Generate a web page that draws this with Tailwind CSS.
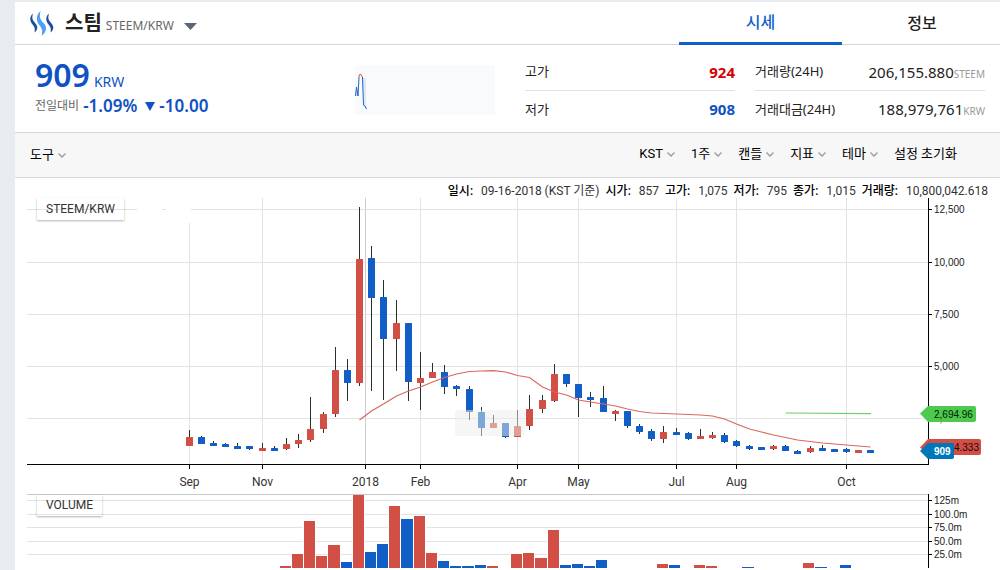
<!DOCTYPE html>
<html lang="ko">
<head>
<meta charset="utf-8">
<title>STEEM/KRW</title>
<script src="https://cdn.jsdelivr.net/npm/@tailwindcss/browser@4"></script>
</head>
<body class="min-h-screen overflow-hidden bg-[#e8ecf0] pt-0.5 pl-[15px] font-['Noto_Sans','Noto_Sans_CJK_KR',sans-serif] text-[#222]">
<main class="min-h-screen bg-white">
  <header class="flex h-[43px] items-stretch justify-between border-b border-[#d3d6dc]">
    <button class="flex items-center pl-[15px]">
      <svg class="h-[25px] w-6" viewBox="0 0 24 25" aria-hidden="true">
        <path fill="#1a5099" d="M3 2.500C1.500 8 2.500 9 5.500 12.500C8.500 16 7.500 19 4.500 21.500C5.300 17.500 4.500 16 2.500 13.500C-.8 9.500-.3 5.500 3 2.500Z"/>
        <path fill="#4ba2f2" d="M10.500 0C9 7 10.500 9 14 12.500C17.500 16.500 16.500 21 11.500 25C13 20.500 12 17.500 10 15C5.500 10 6 4 10.500 0Z"/>
        <path fill="#1a5099" d="M19 2.500C17.500 8 18.500 9 21.500 12.500C24.500 16 23.500 19 20.500 21.500C21.300 17.500 20.500 16 18.500 13.500C15.200 9.500 15.700 5.500 19 2.500Z"/>
      </svg>
      <span class="ml-[11px] text-xl font-bold leading-none">스팀</span>
      <span class="mt-1.5 ml-1 text-xs text-[#666]">STEEM/KRW</span>
      <svg class="mt-1.5 ml-2.5 h-[7px] w-[13px]" viewBox="0 0 13 7" aria-hidden="true"><path fill="#5d6578" d="M0 0H13L6.500 7Z"/></svg>
    </button>
    <nav class="flex text-base font-medium">
      <a href="#price" class="-mb-px flex w-[163px] items-center justify-center border-b-3 border-[#115fcb] text-[#115fcb]">시세</a>
      <a href="#info" class="flex w-[158px] items-center justify-center pl-0.5">정보</a>
    </nav>
  </header>

  <section class="flex h-[88px] justify-between border-b border-[#d3d6dc] pr-[15px] pl-5">
    <div class="pt-3 text-[#0f52c4]">
      <p class="flex items-baseline gap-1 leading-9"><strong class="text-[32px] font-semibold">909</strong><span class="text-sm">KRW</span></p>
      <p class="flex items-center gap-1 leading-[26px]"><span class="text-xs text-[#666]">전일대비</span><b class="text-[17px] font-semibold">-1.09%</b>
        <b class="flex items-center gap-1 text-[17px] font-semibold"><svg class="ml-1 h-[9px] w-[10px]" viewBox="0 0 10 9" aria-hidden="true"><path fill="#0f52c4" d="M0 0H10L5 9Z"/></svg>-10.00</b></p>
    </div>
    <div class="flex">
      <svg class="mt-5 mr-[30px] h-[50px] w-[140px] bg-[#f8fafc]" viewBox="0 0 140 50" fill="none" aria-hidden="true">
        <path fill="#dfe8f4" d="M0 31L1.500 22L3 31L4 13H11V44L8.500 40L7.500 13H4L3 31Z"/>
        <path stroke="#1f66c9" d="M.5 31L1.500 22L3 31L4 12M7.500 12L8.500 40L10 41L11.500 44"/>
        <path stroke="#e2574c" d="M4 12L4.500 9.500H6L7.500 12"/>
      </svg>
      <dl class="mt-[9px] mr-5 w-[210px] text-[13px]">
        <div class="flex h-[37px] items-center justify-between border-b border-[#dfe1e9]"><dt>고가</dt><dd class="text-[15px] font-bold text-[#d60000]">924</dd></div>
        <div class="flex h-[37px] items-center justify-between"><dt>저가</dt><dd class="text-[15px] font-bold text-[#0f52c4]">908</dd></div>
      </dl>
      <dl class="mt-[9px] w-[230px] text-[13px]">
        <div class="flex h-[37px] items-center justify-between border-b border-[#dfe1e9]"><dt>거래량(24H)</dt><dd class="text-[15px]">206,155.880<small class="text-[10px] text-[#999]">STEEM</small></dd></div>
        <div class="flex h-[37px] items-center justify-between"><dt>거래대금(24H)</dt><dd class="text-[15px]">188,979,761<small class="text-[10px] text-[#999]">KRW</small></dd></div>
      </dl>
    </div>
  </section>

  <div class="flex h-[45px] items-center justify-between border-b border-[#d9d9dc] bg-[#f7f7f7] pr-[43px] pl-[15px] font-['Roboto','Noto_Sans_CJK_KR',sans-serif] text-[13px] text-black">
    <button class="flex items-center gap-1">도구<svg class="h-[5px] w-2" viewBox="0 0 8 5" fill="none" stroke="#999" stroke-width="1.300"><path d="M.5 .5L4 4L7.500 .5"/></svg></button>
    <div class="-mt-0.5 flex gap-4">
      <button class="flex items-center gap-1">KST<svg class="h-[5px] w-2" viewBox="0 0 8 5" fill="none" stroke="#999" stroke-width="1.300"><path d="M.5 .5L4 4L7.500 .5"/></svg></button>
      <button class="flex items-center gap-1">1주<svg class="h-[5px] w-2" viewBox="0 0 8 5" fill="none" stroke="#999" stroke-width="1.300"><path d="M.5 .5L4 4L7.500 .5"/></svg></button>
      <button class="flex items-center gap-1">캔들<svg class="h-[5px] w-2" viewBox="0 0 8 5" fill="none" stroke="#999" stroke-width="1.300"><path d="M.5 .5L4 4L7.500 .5"/></svg></button>
      <button class="flex items-center gap-1">지표<svg class="h-[5px] w-2" viewBox="0 0 8 5" fill="none" stroke="#999" stroke-width="1.300"><path d="M.5 .5L4 4L7.500 .5"/></svg></button>
      <button class="flex items-center gap-1">테마<svg class="h-[5px] w-2" viewBox="0 0 8 5" fill="none" stroke="#999" stroke-width="1.300"><path d="M.5 .5L4 4L7.500 .5"/></svg></button>
      <button>설정 초기화</button>
    </div>
  </div>

  <section class="font-['Roboto','Noto_Sans_CJK_KR',sans-serif] text-xs text-[#333]">
    <p class="flex h-5 items-end justify-end gap-1.5 pr-3 leading-[14px] whitespace-nowrap">
      <span><b class="mr-[5px] font-medium text-black">일시:</b> 09-16-2018 (KST 기준)</span>
      <span><b class="mr-[5px] font-medium text-black">시가:</b> 857</span>
      <span><b class="mr-[5px] font-medium text-black">고가:</b> 1,075</span>
      <span><b class="mr-[5px] font-medium text-black">저가:</b> 795</span>
      <span><b class="mr-[5px] font-medium text-black">종가:</b> 1,015</span>
      <span><b class="mr-[5px] font-medium text-black">거래량:</b> 10,800,042.618</span>
    </p>
    <div class="relative">
      <svg id="chart" class="block h-auto w-full" viewBox="15 198 985 372" fill="none">
        <g id="grid" stroke="#e3e3e3"></g>
        <g id="volume"></g>
        <g stroke="#000">
          <path d="M928.500 198V465M27 464.500H929M928.500 494V568"/>
          <path id="ticks"/>
        </g>
        <g id="candles"></g>
        <path stroke="#d9685f" stroke-width="1.200" d="M359.500 420L371.500 411L383.500 404L396.500 396L408.500 391L420.500 387L432.500 382L444.500 377.500L456.500 374L469.500 371.500L481.500 371L493.500 370.700L505.500 372L517.500 375.500L529.500 377.500L542.500 387L554.500 392L566.500 395L578.500 400L590.500 402L603.500 404L615.500 406L627.500 409L639.500 411.500L651.500 413L676.500 414L700.500 415L712.500 416L724.500 419L736.500 424L749.500 429L761.500 432L773.500 435L797.500 440L822.500 443L846.500 445L870.500 447"/>
        <path stroke="#6fcf6d" stroke-width="1.200" d="M785.500 413L871 413.600"/>
        <rect x="455" y="410" width="70" height="26" rx="3" fill="#eee" fill-opacity=".5"/>
        <g id="months" class="text-xs" fill="#333" text-anchor="middle"></g>
        <g id="scale" class="font-['Liberation_Sans',sans-serif] text-[10px]" fill="#222"></g>
        <g class="font-['Liberation_Sans',sans-serif] text-[10px]">
          <path fill="#4dc94d" d="M920 413.500L928 406H974Q976 406 976 408V420Q976 422 974 422H928Z"/>
          <text x="934" y="418" fill="#062006">2,694.96</text>
          <path fill="#d24f45" d="M920 447.500L928 439H979Q981 439 981 441V453Q981 455 979 455H928Z"/>
          <text x="979" y="451" text-anchor="end" fill="#200606">1,124.333</text>
          <path fill="#0077b8" d="M920 451L928 443H952Q954 443 954 445V457Q954 459 952 459H928Z"/>
          <text x="934" y="455" fill="#fff" class="font-bold">909</text>
        </g>
      </svg>
      <span class="absolute top-0 left-[22px] h-[22px] px-[9px] leading-[22px] shadow-[0_1px_2px_rgba(0,0,0,0.3)]">STEEM/KRW</span>
      <span class="absolute top-[297px] left-[22px] h-[21px] px-[9px] leading-5 shadow-[0_1px_2px_rgba(0,0,0,0.3)]">VOLUME</span>
    </div>
  </section>
</main>
<script>
const RED = '#d24f45', BLUE = '#115fc6';
const fill = (id, html) => { document.getElementById(id).innerHTML = html; };
const months = [[189.5,'Sep'],[262.5,'Nov'],[365.5,'2018'],[420.5,'Feb'],[517.5,'Apr'],[578.5,'May'],[676.5,'Jul'],[736.5,'Aug'],[846.5,'Oct']];
const prices = [[209.5,'12,500'],[262.5,'10,000'],[314.5,'7,500'],[366.5,'5,000'],[418.5,'2,500']];
const volumes = [[500.5,'125m'],[514.5,'100.0m'],[527.5,'75.0m'],[541.5,'50.0m'],[554.5,'25.0m']];

fill('grid',
  months.map(([x, t]) => `<path d="M${x} ${t === 'Sep' ? 223 : 198}V464"${t === '2018' ? ' stroke="#ccc"' : ''}/>`).join('') +
  prices.slice(1).concat(volumes).map(([y]) => `<path d="M27 ${y}H928"/>`).join('') +
  '<path d="M27 209.5H137M162 209.5H166M191 209.5H928"/><path stroke="#c8cac8" d="M27 494.5H928"/>');
document.getElementById('ticks').setAttribute('d',
  months.map(([x]) => `M${x} 465V469`).join('') + prices.concat(volumes).map(([y]) => `M929 ${y}H932`).join(''));
fill('months', months.map(([x, t]) => `<text x="${x}" y="486">${t}</text>`).join(''));
fill('scale', prices.concat(volumes).map(([y, t]) => `<text x="934" y="${y + 3.5}">${t}</text>`).join(''));

// x, body top, body bottom, wick top, wick bottom, rising
const candles = [
[189,437,446,430,446,1],[201,437,444,436,444,0],[213,443,446,441,446,0],[225,444,447,443,447,0],[237,446,449,443,449,0],[249,446,449,446,450,0],
[262,448,451,443,451,1],[274,448,451,446,451,0],[286,444,449,438,450,1],[298,440,444,434,448,1],[310,429,440,397,442,1],[323,414,429,412,433,1],
[335,370,414,347,417,1],[347,370,383,359,401,0],[359,259,383,207,386,1],[371,258,298,246,391,0],[383,297,339,280,400,0],[396,323,339,300,371,1],
[408,323,382,323,401,0],[420,378,383,352,410,1],[432,372,378,363,378,1],[444,372,387,365,394,0],[456,386,389,385,396,0],[469,389,412,386,420,0],
[481,412,428,407,436,0],[493,423,428,415,428,1],[505,423,437,423,438,0],[517,426,437,410,437,1],[529,409,426,395,430,1],[542,400,409,395,413,1],
[554,374,401,364,402,1],[566,374,384,374,387,0],[578,384,398,384,417,0],[590,397,400,392,407,0],[603,398,412,386,412,0],[615,411,414,410,421,1],
[627,411,426,411,428,0],[639,426,432,424,434,0],[651,431,439,429,441,0],[663,432,439,426,443,1],[676,432,435,428,435,0],[688,433,439,432,440,0],
[700,436,439,429,439,1],[712,435,438,432,439,1],[724,435,442,433,443,0],[736,441,446,440,447,0],[749,446,449,445,450,0],[761,447,450,447,450,0],
[773,446,449,445,450,1],[785,446,451,445,451,0],[797,451,454,450,454,0],[810,448,452,446,453,1],[822,448,451,445,451,0],[834,449,452,449,452,0],
[846,449,452,448,453,0],[858,450,453,450,453,1],[870,450,453,450,453,0]];
fill('candles', candles.map(([x, t, b, h, l, up]) =>
  `<path stroke="#263133" d="M${x + .5} ${h}V${l}"/><rect x="${x - 3}" y="${t}" width="7" height="${b - t}" rx=".5" fill="${up ? RED : BLUE}"/>`).join(''));

// left, right, top, rising
const bars = [[280,291,566,1],[292,303,554,1],[304,315,521,1],[316,327,556,1],[328,340,545,1],[341,352,562,0],[353,364,495,1],[365,376,552,0],
[377,388,544,0],[389,400,506,1],[401,413,519,0],[414,425,516,1],[426,437,553,1],[438,449,561,0],[450,461,566,0],[462,474,566,0],[475,486,565,0],
[487,498,566,1],[511,522,554,1],[523,534,553,1],[535,547,558,1],[548,559,530,1],[560,571,565,0],[572,583,564,0],[584,595,566,0],[596,607,560,0],
[657,668,564,1],[669,680,565,0],[694,705,565,1],[706,717,566,1],[742,754,567,0],[803,814,563,1],[815,827,567,0],[840,851,565,0]];
fill('volume', bars.map(([l, r, t, up]) =>
  `<rect x="${l - 1}" y="${t}" width="${r - l + 2}" height="${568 - t}" fill="#fff"/><rect x="${l}" y="${t}" width="${r - l}" height="${568 - t}" fill="${up ? RED : BLUE}"/>`).join(''));
</script>
</body>
</html>
